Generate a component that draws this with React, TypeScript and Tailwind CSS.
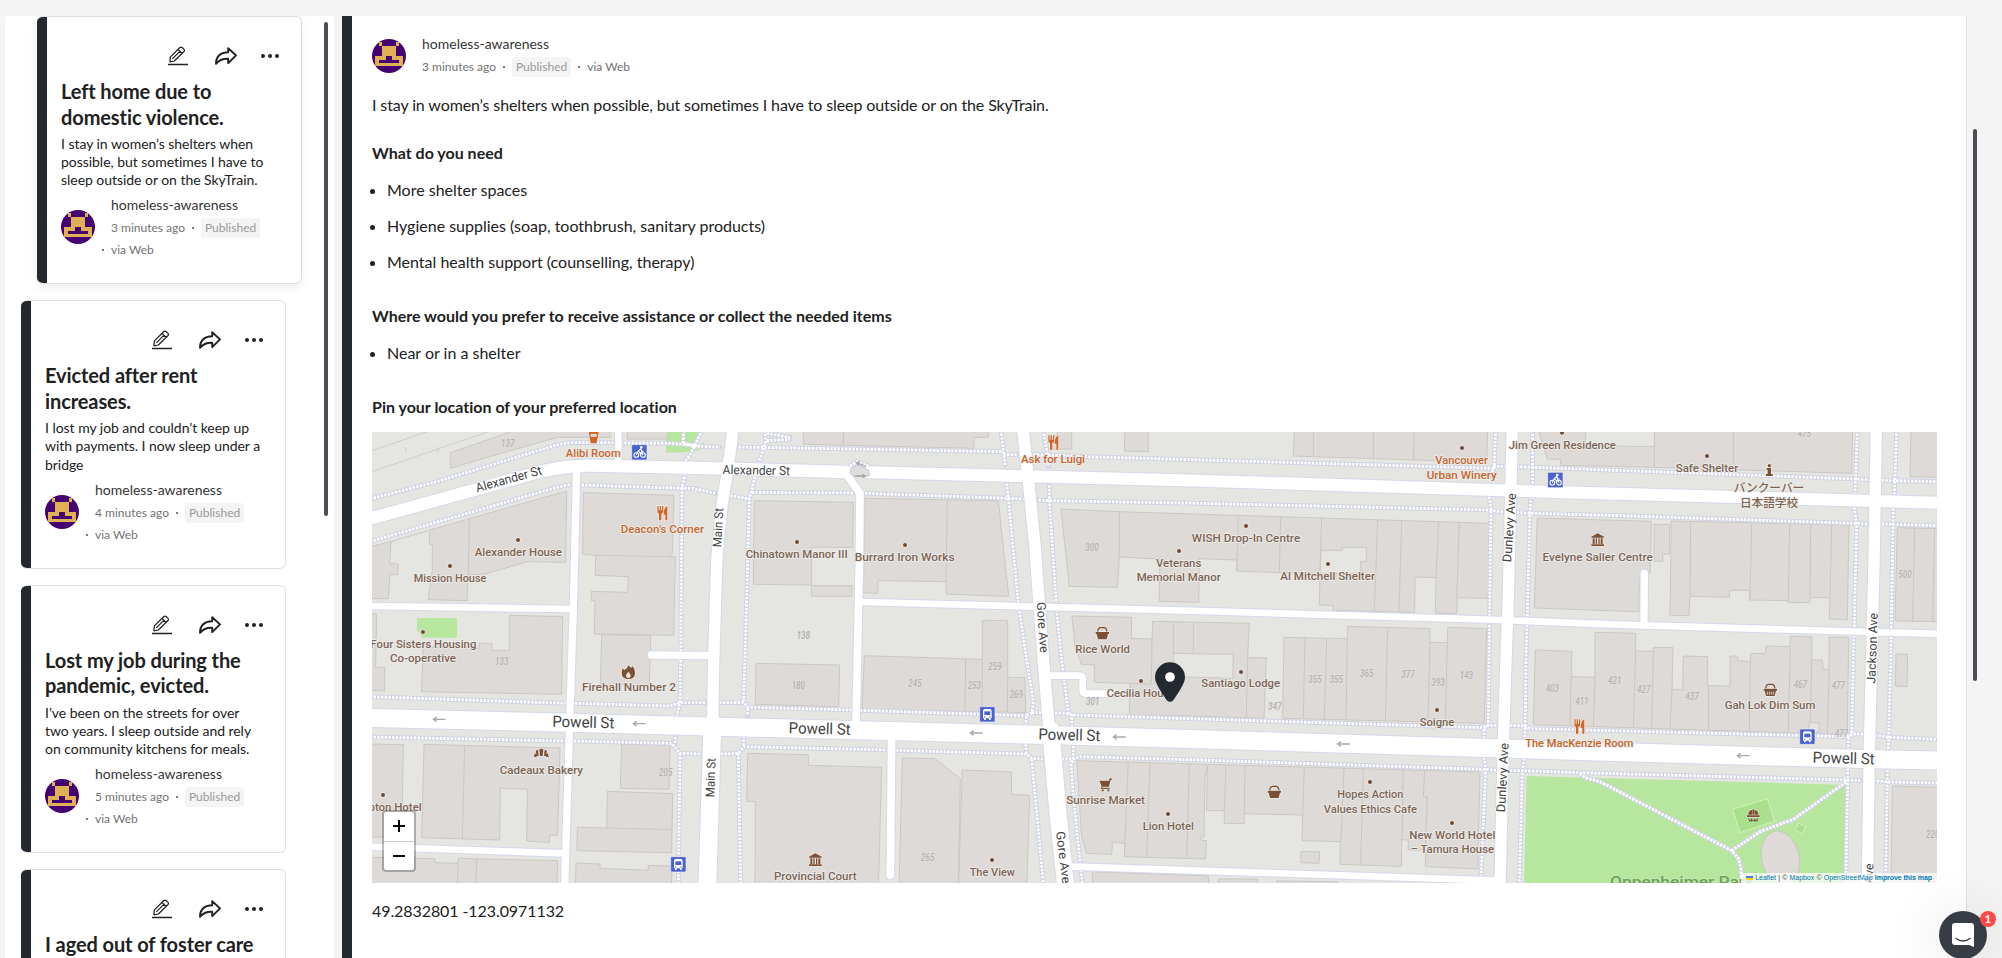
import React from "react";

const BROWN = "#7c6455";
const ORANGE = "#c4652f";
const LAND = "#e5e5e1";

/* ---------- Map geometry (3 units per screen pixel) ---------- */

type Tile = { at: [number, number]; shapes: string[]; lines: string[] };

const buildings: Tile[] = [
  {
    at: [0, 0],
    shapes: [
      "241,115 241,68 420,6 440,0 720,0 720,22 563,22 400,68",
      "180,300 590,183 587,397 473,395 345,432 295,434 291,512 175,509 187,420 187,345 178,343",
      "0,350 63,335 59,400 85,402 83,434 59,434 55,506 0,506",
      "772,0 892,0 892,27 772,27",
      "640,188 912,196 907,370 898,380 916,380 911,616 673,612 675,512 664,512 664,484 773,487 775,440 676,436 677,376 638,373",
      "1153,212 1450,217 1448,352 1325,352 1325,465 1150,463",
      "1324,467 1446,467 1446,499 1324,499",
      "695,614 842,616 838,764 691,764",
      "418,556 578,560 575,793 154,785 160,650 328,655 328,640 365,640 365,661 418,661",
      "0,550 20,552 17,712 44,712 44,782 0,782",
    ],
    lines: ["298,265 295,434", "677,376 898,380", "63,335 180,300"],
  },
  {
    at: [0, 660],
    shapes: [
      "0,282 100,284 95,560 0,562",
      "162,283 570,294 563,556 539,556 538,577 470,573 472,418 391,415 389,570 155,563",
      "0,622 194,626 194,638 264,640 265,625 563,632 560,720 0,720",
      "755,282 900,285 897,418 751,415",
      "712,424 908,431 905,608 621,602 622,532 710,534",
      "618,639 690,642 690,655 834,661 835,646 906,648 904,720 616,720",
      "1158,40 1409,45 1406,170 1156,163",
      "1133,310 1315,314 1315,346 1535,352 1525,720 1155,720 1156,455 1130,454",
    ],
    lines: ["284,287 277,566", "264,640 262,700", "320,627 318,700", "710,534 905,539"],
  },
  {
    at: [1230, 0],
    shapes: [
      "70,0 625,0 625,22 582,22 582,55 70,43",
      "255,205 655,212 686,499 498,492 498,455 294,452 293,490 250,488",
      "607,571 683,572 683,742 735,743 737,848 246,838 253,677 607,688",
      "843,237 1018,245 2130,280 2125,505 2032,503 2030,551 1966,549 1968,443 1905,441 1904,547 1660,541 1660,527 1618,525 1620,430 1500,428 1370,423 1370,390 1258,386 1256,517 1137,514 1140,387 1018,381 1012,472 868,469",
      "876,558 1055,562 1054,625 1116,627 1118,574 1408,580 1403,683 1459,683 1452,865 1230,858 1048,855 1050,760 943,757 943,704 905,704 885,650",
      "838,0 875,0 875,57 803,57",
      "1035,0 1105,0 1105,65 1033,63",
    ],
    lines: [
      "190,0 190,46", "502,209 498,455", "557,687 555,843", "607,688 606,845", "683,742 682,846",
      "1018,245 1018,381", "1375,257 1370,423", "1116,627 1114,760", "1180,577 1180,670", "1240,578 1240,671",
      "1403,683 1399,863", "1050,760 1114,762",
    ],
  },
  {
    at: [1230, 660],
    shapes: [
      "367,324 465,326 541,386 535,720 357,720",
      "547,360 695,366 694,433 749,436 740,720 535,720",
      "890,332 1285,343 1275,382 1272,560 1262,562 1262,570 1279,572 1277,627 1033,620 1035,580 997,577 995,613 920,610 905,560",
      "937,665 1286,678 1286,720 937,720",
    ],
    lines: ["1045,335 1033,620", "1110,337 1100,621", "1228,342 1220,625"],
  },
  {
    at: [2460, 0],
    shapes: [
      "313,0 893,0 890,97 310,78",
      "282,622 472,626 473,589 720,596 720,637 772,638 773,592 890,596 883,880 278,865",
      "1045,0 1988,0 1985,130 1393,112 1112,106 1112,88 1072,87",
      "1042,264 1385,274 1380,430 1350,430 1346,545 1033,534",
      "1036,660 1145,664 1145,740 1215,742 1215,607 1337,610 1337,663 1390,664 1390,652 1449,653 1446,778 1478,780 1480,678 1553,680 1553,767 1620,768 1620,678 1643,678 1643,692 1681,694 1682,670 1727,671 1727,648 1800,650 1801,619 1866,621 1865,690 1897,690 1900,718 1917,718 1918,621 1976,622 1972,908 1912,912 1030,884",
    ],
    lines: [
      "272,261 268,427", "395,263 390,430", "563,270 553,545", "635,273 627,545", "746,277 738,443", "808,279 800,503",
      "345,623 340,867", "410,625 403,868", "472,626 468,870", "593,592 586,874", "720,637 714,877", "772,638 766,879",
      "370,0 370,80", "550,0 550,88", "672,0 671,92", "1393,0 1393,112", "1630,0 1630,120",
      "1143,740 1140,886", "1215,742 1210,888", "1337,663 1330,892", "1390,664 1385,895", "1446,778 1440,897",
      "1556,768 1556,899", "1681,694 1678,902", "1801,650 1795,904", "1865,690 1861,907", "1918,718 1912,912",
    ],
  },
  {
    at: [2460, 660],
    shapes: [
      "52,343 870,366 863,657 706,650 708,600 654,600 655,570 635,569 634,649 450,643 451,575 336,572 338,495 163,491 162,521 103,520 103,482 50,482",
      "333,604 389,606 387,640 333,638",
      "85,687 203,687 203,720 85,720",
      "260,693 443,695 443,720 260,720",
    ],
    lines: ["108,345 103,482", "165,347 163,491", "343,351 338,495", "462,354 453,573", "520,356 512,645", "640,360 636,569", "704,362 700,440 712,441 706,600"],
  },
  {
    at: [3630, 0],
    shapes: [
      "223,283 269,283 268,372 248,372 248,394 222,394",
      "274,273 807,285 802,569 748,567 750,503 690,503 689,518 625,517 625,512 508,510 508,481 449,481 448,502 330,499 327,557 270,556",
      "993,0 1080,0 1080,142 990,140",
      "952,293 1080,296 1080,575 945,573",
      "948,672 983,673 981,770 946,768",
      "937,1068 1080,1072 1080,1380 933,1380",
    ],
    lines: ["332,275 330,499", "515,278 510,510", "629,281 625,515", "692,283 690,503", "755,284 750,503", "1004,294 998,574", "1064,295 1058,575"],
  },
];

const courtyards = [
  "2853,361 2917,361 2917,352 2989,352 2989,394 2972,394 2972,430 2850,430",
  "2411,670 2590,673 2588,745 2411,740",
  "3647,0 3853,0 3853,50 3647,47",
  "4318,878 4348,879 4347,906 4316,905",
];

const footways = [
  "0,207 200,155 560,45 600,38 730,38",
  "752,39 900,40 960,45 1000,50 1050,51",
  "1095,51 1900,65",
  "1900,75 1945,73", "1990,73 2035,75 2145,80 3370,115",
  "3370,108 3410,110", "3440,110 3490,112 4455,147 4500,149", "4535,151 4701,155",
  "940,0 940,40 980,48", "997,0 960,75 945,95", "945,130 936,175 932,690 930,815 920,858",
  "0,335 560,172 605,163", "635,165 936,175 970,175 1035,190", "1070,195 1140,207",
  "1185,0 1187,40 1165,100", "1155,140 1138,207 1125,690 1120,815",
  "1190,10 1260,22", "1190,32 1260,28",
  "1145,187 1460,189", "1485,190 1920,205 1960,207", "1995,210 2040,212 2490,220 3360,240 3405,247",
  "3440,247 3480,250 3720,256 4455,280 4495,282", "4535,282 4701,287",
  "1893,0 1905,105", "1908,150 1915,205 1945,520 1970,690 1990,815 1987,848 1970,855 1967,885",
  "2020,0 2030,60 2036,110", "2038,155 2038,212 2060,540 2075,690 2095,848 2105,855 2105,895",
  "0,800 590,820", "615,820 900,828 930,818 1010,818", "1048,818 1120,818 1135,832 1445,840", "1133,835 1133,858",
  "1470,841 1967,857", "1985,848 2020,848", "2055,848 2090,850 2110,855 2490,867 3340,893 3350,887 3385,886",
  "3420,886 3465,888 3480,896 3720,902 4430,920 4450,912 4480,912", "4515,915 4555,922 4701,928",
  "0,921 590,933", "612,933 905,940 930,970 1000,972", "1052,972 1105,970 1122,950 1555,960",
  "1578,961 1970,972 1985,985 2018,987", "2075,987 2110,987 2130,980 2490,990 3345,1018 3380,1021",
  "3420,1022 3460,1022 3630,1028 4430,1050 4475,1052", "4510,1052 4555,1056 4701,1059",
  "918,910 915,942", "930,970 925,1360", "1122,918 1120,950", "1105,970 1112,1360",
  "1967,942 1970,972", "1985,988 2020,1360", "2110,948 2110,985 2103,1005 2110,1100 2137,1360",
  "3377,0 3372,115 3360,140", "3358,200 3363,240 3357,690 3355,885 3342,895 3342,925",
  "3488,0 3488,165", "3483,200 3480,250 3468,690 3465,930",
  "3342,982 3347,1018 3333,1340", "3463,985 3457,1022 3448,1360",
  "4462,0 4455,195", "4453,232 4460,290 4450,690 4445,910 4435,925 4435,958", "4433,1015 4433,1055 4427,1360",
  "4580,0 4573,195", "4570,235 4562,690 4555,960", "4552,1020 4547,1360",
  "3630,1030 3645,1043 3690,1055 4085,1262 4105,1285 4113,1315 4115,1360",
  "4085,1262 4170,1205 4270,1168 4430,1055",
  "1440,108 1462,95 1500,110",
];

const roads: [string, number][] = [
  ["M0 266L440 145Q560 107 660 107L1040 115L1430 126", 37],
  ["M1500 127L2490 152L3630 188L4701 218", 36],
  ["M1090 -10Q1080 80 1060 200Q1048 280 1040 400L1031 690L1028 890", 34],
  ["M1027 890L1012 1370", 53],
  ["M620 110L611 500L600 840L584 1370", 22],
  ["M0 528L600 537", 20],
  ["M0 1250L580 1270", 20],
  ["M0 864L600 878L1230 895L2030 915L2490 928L3380 955L3630 963L4480 987L4710 992", 54],
  ["M745 0L745 100", 19],
  ["M1430 135L1470 190L1468 400L1462 690L1458 880", 23],
  ["M1565 910L1561 1336", 23],
  ["M1475 516L2490 543L3390 570L3720 583L4710 612", 20],
  ["M1958 -10L1975 150L1995 350L2020 690L2037 890", 35],
  ["M2042 900L2065 1160L2087 1370", 51],
  ["M2040 737L2128 737Q2138 737 2138 747L2138 781Q2138 791 2148 791L2215 791", 20],
  ["M844 675L1030 677", 22],
  ["M2110 1310L2490 1322L3390 1352", 20],
  ["M3427 -10L3415 500L3408 690L3400 940L3390 1370", 34],
  ["M4519 -10L4512 400L4503 760L4498 960L4492 1370", 34],
  ["M3823 430L3822 580", 22],
];

/* x, baseline, text, width, colour */
const places: [number, number, string, number, string][] = [
  [670, 80, "Alibi Room", 165, ORANGE],
  [445, 378, "Alexander House", 262, BROWN],
  [240, 457, "Mission House", 218, BROWN],
  [160, 654, "Four Sisters Housing", 318, BROWN],
  [159, 697, "Co-operative", 198, BROWN],
  [877, 309, "Deacon’s Corner", 250, ORANGE],
  [1280, 385, "Chinatown Manor III", 306, BROWN],
  [777, 784, "Firehall Number 2", 282, BROWN],
  [514, 1031, "Cadeaux Bakery", 250, BROWN],
  [39, 1143, "Hampton Hotel", 232, BROWN],
  [1604, 393, "Burrard Iron Works", 300, BROWN],
  [2049, 98, "Ask for Luigi", 192, ORANGE],
  [2426, 410, "Veterans", 136, BROWN],
  [2426, 453, "Memorial Manor", 252, BROWN],
  [2628, 336, "WISH Drop-In Centre", 325, BROWN],
  [2873, 451, "Al Mitchell Shelter", 284, BROWN],
  [3275, 103, "Vancouver", 158, ORANGE],
  [3275, 146, "Urban Winery", 210, ORANGE],
  [3577, 56, "Jim Green Residence", 321, BROWN],
  [3683, 392, "Evelyne Saller Centre", 331, BROWN],
  [4011, 126, "Safe Shelter", 188, BROWN],
  [4197, 186, "バンクーバー", 212, BROWN],
  [4197, 230, "日本語学校", 174, BROWN],
  [2198, 668, "Rice World", 164, BROWN],
  [2313, 801, "Cecilia House", 206, BROWN],
  [2612, 772, "Santiago Lodge", 236, BROWN],
  [3201, 888, "Soigne", 104, BROWN],
  [3628, 950, "The MacKenzie Room", 325, ORANGE],
  [4200, 838, "Gah Lok Dim Sum", 272, BROWN],
  [1336, 1351, "Provincial Court", 248, BROWN],
  [1867, 1337, "The View", 136, BROWN],
  [2207, 1123, "Sunrise Market", 236, BROWN],
  [2395, 1199, "Lion Hotel", 154, BROWN],
  [3001, 1105, "Hopes Action", 198, BROWN],
  [3001, 1148, "Values Ethics Cafe", 280, BROWN],
  [3247, 1226, "New World Hotel", 258, BROWN],
  [3247, 1270, "– Tamura House", 250, BROWN],
];

const numbers: [number, number, string][] = [
  [413, 50, "137"], [395, 706, "133"], [1300, 627, "138"], [1285, 776, "180"], [1635, 772, "245"],
  [1813, 777, "253"], [1875, 720, "259"], [1939, 805, "269"], [1673, 1294, "265"], [887, 1039, "205"],
  [2166, 362, "300"], [2168, 826, "301"], [2714, 839, "347"], [2835, 758, "355"], [2899, 760, "355"],
  [2990, 742, "365"], [3114, 745, "377"], [3204, 767, "393"], [3289, 747, "143"], [3547, 786, "403"],
  [3636, 825, "411"], [3734, 761, "421"], [3821, 789, "427"], [3966, 810, "437"], [4291, 773, "467"],
  [4405, 778, "477"], [4414, 920, "477"], [4303, 22, "475"], [4605, 443, "500"], [4688, 1225, "220"],
];

/* x, y, rotation, text, width, size */
const streets: [number, number, number, string, number, number][] = [
  [416, 147, -15.5, "Alexander St", 204, 38],
  [1159, 121, 1, "Alexander St", 202, 38],
  [1044, 293, -87, "Main St", 118, 37],
  [1022, 1043, -88, "Main St", 118, 37],
  [640, 877, 1.5, "Powell St", 186, 47],
  [1349, 896, 1.5, "Powell St", 186, 47],
  [2098, 915, 1.5, "Powell St", 186, 47],
  [4421, 985, 1.5, "Powell St", 186, 47],
  [2018, 592, 86, "Gore Ave", 152, 37],
  [2080, 1282, 83, "Gore Ave", 158, 37],
  [3418, 293, -86, "Dunlevy Ave", 208, 37],
  [3398, 1043, -87, "Dunlevy Ave", 208, 37],
  [4507, 655, -88, "Jackson Ave", 212, 37],
  [4494, 1406, -88, "Jackson Ave", 212, 37],
];

const dots: [number, number][] = [
  [444, 330], [240, 408], [159, 606], [39, 1095], [1281, 336], [1605, 345], [2427, 363], [2628, 288], [2874, 402],
  [3276, 54], [3576, 8], [4011, 78], [2313, 753], [2613, 726], [3201, 840], [1866, 1290], [2394, 1152], [3000, 1056], [3246, 1179],
];

const arrows: [number, number][] = [[208, 868], [808, 881], [1819, 909], [2248, 921], [2921, 942], [4120, 977]];

function Cutlery({ x, y }: { x: number; y: number }) {
  return (
    <g transform={`translate(${x} ${y})`} fill="#d1662a" stroke="#f3efea" strokeWidth="4" paintOrder="stroke">
      <path d="M-15-22h4v13h3v-13h4v13h3v-13h4v16q0 5-6 7v20h-7V1q-5-2-5-7z" />
      <path d="M15-23v44H9V4H4q-1-20 11-27z" />
    </g>
  );
}

function Basket({ x, y, slats }: { x: number; y: number; slats?: boolean }) {
  return (
    <g transform={`translate(${x} ${y})`} fill="#7b5135" stroke="#f3efea" strokeWidth="4" paintOrder="stroke">
      <path d="M-20-3h40v6h-3l-4 16h-26l-4-16h-3z" />
      <path d="M-14-4q2-12 9-12H5q7 0 9 12" fill="none" stroke="#7b5135" strokeWidth="3.5" />
      {slats && <path d="M-9 6v9M-3 6v9M3 6v9M9 6v9" stroke="#e8e2dc" strokeWidth="2.5" />}
    </g>
  );
}

function Museum({ x, y }: { x: number; y: number }) {
  return (
    <g transform={`translate(${x} ${y})`} fill="#7b5135" stroke="#f3efea" strokeWidth="3" paintOrder="stroke">
      <path d="M-19-9L0-19 19-9v3h-38zM-15-4h6v17h-6zM-6-4h4v17h-4zM2-4h4v17H2zM9-4h6v17H9zM-19 14h38v5h-38z" />
    </g>
  );
}

function Bike({ x, y }: { x: number; y: number }) {
  return (
    <g transform={`translate(${x} ${y})`}>
      <rect x="-23" y="-23" width="46" height="46" rx="3" fill="#4a62cf" stroke="#eef0f8" strokeWidth="2" />
      <g fill="none" stroke="#fff" strokeWidth="3.2">
        <circle cx="-9" cy="8" r="7" />
        <circle cx="11" cy="8" r="7" />
        <path d="M-9 8l5-11 7 4v8M-4-3l8-8 4 8h5M4-11l7 19" />
      </g>
      <circle cx="6" cy="-15" r="4" fill="#fff" />
    </g>
  );
}

function Bus({ x, y }: { x: number; y: number }) {
  return (
    <g transform={`translate(${x} ${y})`}>
      <rect x="-23" y="-23" width="46" height="46" rx="3" fill="#4a62cf" stroke="#eef0f8" strokeWidth="2" />
      <path d="M-13 12v-22q0-6 6-6H7q6 0 6 6v22h-3v5H5v-5H-5v5h-5v-5z" fill="#fff" />
      <path d="M-9-9H9V2H-9z" fill="#4a62cf" />
      <circle cx="-8" cy="8" r="2" fill="#4a62cf" />
      <circle cx="8" cy="8" r="2" fill="#4a62cf" />
    </g>
  );
}

function MapDrawing() {
  return (
    <svg viewBox="6 6 4695 1353" className="block h-full w-full font-[Roboto,'Noto_Sans_CJK_JP',sans-serif]" preserveAspectRatio="none">
      <rect width="4710" height="1370" fill={LAND} />
      <g fill="none" stroke="#c9c9cb" strokeWidth="2.5">
        <path d="M0 64L186 0M0 127L370 0M104 50l6 16M200 50l6 16" />
      </g>
      <g fill="#b7e69f">
        <path d="M888 0H992L975 65L888 68zM975 60L1002 36V44L985 62z" />
        <path d="M141 564H261V623H158L141 600z" />
        <path d="M3470 1038L4432 1065L4425 1370H3462z" />
      </g>
      <path d="M4088 1138L4192 1106L4214 1174L4110 1208zM4285 1179L4308 1190L4297 1211L4276 1201z" fill="#a9df8f" stroke="#d8f3b4" strokeWidth="3" />
      <ellipse cx="4231" cy="1284" rx="56" ry="82" transform="rotate(-12 4231 1284)" fill="#dddad7" stroke="#cbc8c4" strokeWidth="3" />
      {buildings.map((tile, i) => (
        <g key={i} transform={`translate(${tile.at[0]} ${tile.at[1]})`} stroke="#cbc8c4" strokeWidth="3">
          {tile.shapes.map((p) => (
            <polygon key={p} points={p} fill="#dddad7" />
          ))}
          {tile.lines.map((p) => (
            <polyline key={p} points={p} fill="none" />
          ))}
        </g>
      ))}
      {courtyards.map((p) => (
        <polygon key={p} points={p} fill={LAND} stroke="#cbc8c4" strokeWidth="3" />
      ))}
      <g fill="none" strokeLinejoin="round">
        {footways.map((p) => (
          <polyline key={p} points={p} stroke="#d0d3e3" strokeWidth="14" strokeLinecap="round" />
        ))}
        {footways.map((p) => (
          <polyline key={p} points={p} stroke="#fff" strokeWidth="8.5" strokeDasharray="7 4" />
        ))}
      </g>
      <g fill="none" strokeLinejoin="round" strokeLinecap="round">
        {roads.map(([d, w]) => (
          <path key={d} d={d} stroke="#d5d8e8" strokeWidth={w + 6} strokeLinecap="butt" />
        ))}
        <path d="M844 675h1M1561 1336v1M3823 430v1" stroke="#d5d8e8" strokeWidth="28" />
        {roads.map(([d, w]) => (
          <path key={d} d={d} stroke="#fff" strokeWidth={w} />
        ))}
      </g>
      <path d="M1440 130L1442 118L1462 104L1496 120L1498 138H1455z" fill="#e0dfde" stroke="#c8cad6" strokeWidth="3" />
      <path d="M1455 138H1485M1478 133l8 5-8 5M1486 108L1462 99M1470 95l-10 3 6 8" fill="none" stroke="#aaa29e" strokeWidth="4" />
      {arrows.map(([x, y]) => (
        <path key={x} d={`M${x - 18} ${y}H${x + 19}M${x - 8} ${y - 7}L${x - 18} ${y}L${x - 8} ${y + 7}`} fill="none" stroke="#b0a8a4" strokeWidth="4" />
      ))}
      <g fontSize="30" fontStyle="italic" fontWeight="500" fill="#b3b0ad" textAnchor="middle" stroke="#e6e4e2" strokeWidth="3" paintOrder="stroke">
        {numbers.map(([x, y, t]) => (
          <text key={`${x}-${y}`} x={x} y={y} textLength="40" lengthAdjust="spacingAndGlyphs">{t}</text>
        ))}
      </g>
      <g fill="#434343" textAnchor="middle" stroke="#fff" strokeWidth="5" paintOrder="stroke">
        {streets.map(([x, y, r, t, w, s]) => (
          <text key={`${x}-${y}`} transform={`translate(${x} ${y}) rotate(${r})`} y={s * 0.34} fontSize={s} textLength={w} lengthAdjust="spacingAndGlyphs">{t}</text>
        ))}
      </g>
      <g fontSize="35.5" fontWeight="500" textAnchor="middle" stroke="#f0eeeb" strokeWidth="5" strokeLinejoin="round" paintOrder="stroke">
        {places.map(([x, y, t, w, c]) => (
          <text key={t} x={x} y={y} fill={c} textLength={w} lengthAdjust="spacingAndGlyphs">{t}</text>
        ))}
      </g>
      <text x="3936" y="1370" fontSize="45" fontWeight="500" textAnchor="middle" fill="#6f9f60" stroke="#c4eab0" strokeWidth="4" paintOrder="stroke" textLength="432" lengthAdjust="spacingAndGlyphs">Oppenheimer Park</text>
      <g fill="#6f4a35" stroke="#efebe7" strokeWidth="4" paintOrder="stroke">
        {dots.map(([x, y]) => (
          <circle key={`${x}-${y}`} cx={x} cy={y} r="6" />
        ))}
      </g>
      <Cutlery x={877} y={250} />
      <Cutlery x={2050} y={38} />
      <Cutlery x={3628} y={890} />
      <path d="M656 6H686L680 40H662zM662 12h18v8h-18z" fill="#d1662a" fillRule="evenodd" stroke="#f3efea" strokeWidth="3" paintOrder="stroke" />
      <Bike x={808} y={67} />
      <Bike x={3556} y={150} />
      <Bus x={925} y={1303} />
      <Bus x={1852} y={853} />
      <Bus x={4312} y={920} />
      <Museum x={3683} y={329} />
      <Museum x={1336} y={1289} />
      <Basket x={2197} y={609} />
      <Basket x={2713} y={1085} />
      <Basket x={4201} y={779} slats />
      <g transform="translate(775 727)">
        <path d="M1-22q3 6 8 8l3-5q9 9 8 20 0 19-20 19t-20-19q0-7 4-13l4 5q9-4 13-15z" fill="#7b5135" stroke="#f3efea" strokeWidth="4" paintOrder="stroke" />
        <path d="M0-2q7 7 7 12 0 7-7 7t-7-7q0-5 7-12z" fill="#e9e4df" />
      </g>
      <g transform="translate(514 969)" fill="#7b5135" stroke="#f3efea" strokeWidth="3" paintOrder="stroke">
        <path d="M-6-11q6-3 12 0l-2 20h-8zM-17-7l7-3 2 19h-6zM17-7l-7-3-2 19h6zM-22 12l2-12 5 4 1 8zM22 12l-2-12-5 4-1 8z" />
      </g>
      <g transform="translate(2207 1064)" fill="#7b5135" stroke="#f3efea" strokeWidth="3" paintOrder="stroke">
        <path d="M-19-12H10l1-4q1-4 7-4v5q-3 0-4 3L10 6h-20v3h22v4h-25q-3-4 1-8z" />
        <circle cx="-9" cy="17" r="3.5" />
        <circle cx="8" cy="17" r="3.5" />
      </g>
      <g transform="translate(4198 120)" fill="#7b5135" stroke="#f3efea" strokeWidth="4" paintOrder="stroke">
        <path d="M-8-6H5v18h5v6h-20v-6h5V0h-3z" />
        <circle cx="0" cy="-13" r="5" />
      </g>
      <g transform="translate(4150 1157)" fill="#7b5135" stroke="#f3efea" strokeWidth="3" paintOrder="stroke">
        <path d="M-16-3q2-14 13-15v15zM3-18q11 1 13 15H3zM-2-19h4v16h-4zM-19-1h38v5h-38z" />
        <path d="M-14 8l4 10M-12 14H12M14 8l-4 10M-5 8v10M5 8v10" fill="none" stroke="#7b5135" strokeWidth="3" />
      </g>
      <path fillRule="evenodd" d="M2400 697a45 45 0 0 1 45 45c0 16-14 38-34 67q-11 13-22 0c-20-29-34-51-34-67a45 45 0 0 1 45-45z" fill="#24282f" />
      <circle cx="2400" cy="741" r="14.5" fill="#fff" />
    </svg>
  );
}

/* ---------- Shared pieces ---------- */

function Avatar() {
  return (
    <svg viewBox="0 0 34 34" className="size-[34px] shrink-0 rounded-full" shapeRendering="crispEdges">
      <rect width="34" height="34" fill="#440171" />
      <path d="M7 3h3v4H7zM24 3h3v4h-3zM10 7h14v10H10zM3 17h11v3h6v-3h11v10H3z" fill="#e0b054" />
      <path d="M7 21h20v3H7zM14 17h6v4h-6z" fill="#440171" />
    </svg>
  );
}

function PencilIcon() {
  return (
    <svg viewBox="0 0 20 20" className="h-5 w-5" fill="none" stroke="#212121" strokeWidth="1.25" strokeLinejoin="round">
      <path d="M1.8 15.8L2.4 10.9 11.9 1.5Q13 .6 14.1 1.5L16 3.4Q16.9 4.5 16 5.5L6.4 15 1.8 15.8M10 3.4L14 7.4M4.3 12.9L11.8 5.4" />
      <path d="M0 18.5H20" strokeWidth="1.4" />
    </svg>
  );
}

function ShareIcon() {
  return (
    <svg viewBox="0 0 22 18" className="h-[18px] w-[22px]" fill="none" stroke="#212121" strokeWidth="1.9" strokeLinejoin="round">
      <path d="M13.2 1.2L21 8.4 13.2 16.2V11.8Q5.5 11.4 1 16.8 1 5.8 13.2 5.2z" />
    </svg>
  );
}

function DotsIcon() {
  return (
    <svg viewBox="0 0 18 4" className="h-1 w-[18px]" fill="#212121">
      <circle cx="2" cy="2" r="2" />
      <circle cx="9" cy="2" r="2" />
      <circle cx="16" cy="2" r="2" />
    </svg>
  );
}

function Dot() {
  return <span className="size-[2px] shrink-0 bg-[#777]" />;
}

function Published() {
  return <span className="flex h-5 items-center rounded-[3px] bg-[#f4f4f4] px-[4px] text-[#999]">Published</span>;
}

type Post = { title: string; body?: string; age?: string; active?: boolean };

const posts: Post[] = [
  { title: "Left home due to domestic violence.", body: "I stay in women’s shelters when possible, but sometimes I have to sleep outside or on the SkyTrain.", age: "3 minutes ago", active: true },
  { title: "Evicted after rent increases.", body: "I lost my job and couldn’t keep up with payments. I now sleep under a bridge", age: "4 minutes ago" },
  { title: "Lost my job during the pandemic, evicted.", body: "I’ve been on the streets for over two years. I sleep outside and rely on community kitchens for meals.", age: "5 minutes ago" },
  { title: "I aged out of foster care" },
];

function PostCard({ post }: { post: Post }) {
  return (
    <article
      className={
        post.active
          ? "ml-4 flex h-[268.4px] w-[265px] shrink-0 overflow-hidden rounded-[6px] border border-l-0 border-[#e0e0e0] bg-white shadow-[0_4px_10px_rgba(0,0,0,0.07)]"
          : "flex h-[268.4px] w-[265px] shrink-0 overflow-hidden rounded-[6px] border border-l-0 border-[#e0e0e0] bg-white"
      }
    >
      <div className="-my-px w-[10px] shrink-0 bg-[#24282f]" />
      <div className="flex min-w-0 grow flex-col pl-[14px] pr-[22px] pt-[29px]">
        <div className="flex h-5 items-center justify-end">
          <PencilIcon />
          <span className="ml-[27px]"><ShareIcon /></span>
          <span className="ml-[24px]"><DotsIcon /></span>
        </div>
        <h2 className="mt-[13px] text-[20px] font-bold leading-[25.6px] tracking-[-0.1px] text-[#212121]">{post.title}</h2>
        {post.body && <p className="mt-[4.6px] text-[14px] leading-[18.2px] tracking-[-0.04px] text-[#212121]">{post.body}</p>}
        {post.age && (
          <div className="mt-[6px] flex items-center">
            <Avatar />
            <div className="ml-4 text-[12px] text-[#727272]">
              <div className="text-[14px] leading-5 text-[#363636]">homeless-awareness</div>
              <div className="mt-[3px] flex items-center gap-[7px]">
                {post.age}
                <Dot />
                <Published />
              </div>
              <div className="-ml-[9px] mt-[3px] flex items-center gap-[7px]">
                <Dot />
                via Web
              </div>
            </div>
          </div>
        )}
      </div>
    </article>
  );
}

function Question({ title, items }: { title: string; items: string[] }) {
  return (
    <section>
      <h3 className="text-[16px] font-bold leading-6">{title}</h3>
      <ul className="mt-[13px] list-disc pl-[15px]">
        {items.map((item) => (
          <li key={item} className="mb-3 text-[16px] leading-6">{item}</li>
        ))}
      </ul>
    </section>
  );
}

export default function App() {
  return (
    <div className="relative flex h-[958px] w-[2002px] overflow-hidden bg-[#f4f4f4] pl-[5px] pt-4 font-[Lato,sans-serif] text-[#212121] [font-variant-ligatures:none]">
      <aside className="flex w-[329px] shrink-0 justify-between overflow-hidden rounded-t-[3px] bg-white pl-4 pr-[6px]">
        <div className="flex flex-col gap-4">
          {posts.map((post) => (
            <PostCard key={post.title} post={post} />
          ))}
        </div>
        <div className="mt-[6px] h-[494px] w-1 shrink-0 rounded-full bg-[#4a4f56]" />
      </aside>

      <main className="ml-2 flex w-[1625px] shrink-0 border-r border-[#e0e0e0] bg-white">
        <div className="w-[10px] shrink-0 bg-[#24282f]" />
        <div className="flex flex-col pl-5 pt-[18px]">
          <div className="flex items-center">
            <div className="mt-[1px]"><Avatar /></div>
            <div className="ml-4 text-[12px] text-[#727272]">
              <div className="text-[14px] leading-5 text-[#363636]">homeless-awareness</div>
              <div className="mt-[3px] flex items-center gap-[7px]">
                3 minutes ago
                <Dot />
                <Published />
                <Dot />
                via Web
              </div>
            </div>
          </div>
          <p className="mt-[16px] text-[16px] leading-6 tracking-[-0.115px]">I stay in women’s shelters when possible, but sometimes I have to sleep outside or on the SkyTrain.</p>
          <div className="mt-6 flex flex-col gap-[18px]">
            <Question title="What do you need" items={["More shelter spaces", "Hygiene supplies (soap, toothbrush, sanitary products)", "Mental health support (counselling, therapy)"]} />
            <Question title="Where would you prefer to receive assistance or collect the needed items" items={["Near or in a shelter"]} />
            <h3 className="text-[16px] font-bold leading-6">Pin your location of your preferred location</h3>
          </div>
          <div className="relative mt-[13px] h-[451px] w-[1565px] overflow-hidden">
            <MapDrawing />
            <div className="absolute bottom-[11px] left-[10px] flex h-[62px] w-[34px] flex-col rounded-[4px] border-2 border-black/25 bg-white bg-clip-padding">
              <button className="flex flex-1 items-center justify-center border-b border-[#ccc]">
                <svg viewBox="0 0 12 12" className="size-3" stroke="#000" strokeWidth="2"><path d="M0 6H12M6 0V12" /></svg>
              </button>
              <button className="flex flex-1 items-center justify-center">
                <svg viewBox="0 0 12 12" className="size-3" stroke="#000" strokeWidth="2"><path d="M0 6H12" /></svg>
              </button>
            </div>
            <div className="absolute bottom-0 right-0 flex h-[10px] w-[196px] items-center justify-between whitespace-nowrap bg-white/75 pl-[5px] pr-[5px] font-['Liberation_Sans',sans-serif] text-[7px] leading-[10px] tracking-[-0.05px] text-[#0078a8]">
              <svg viewBox="0 0 7 4" className="h-1 w-[7px]"><path fill="#4c7be1" d="M0 0h7v2H0z" /><path fill="#ffd500" d="M0 2h7v2H0z" /></svg>
              <span>Leaflet</span>
              <span className="text-[#444]">|</span>
              <span className="text-[#444]">©</span>
              <span>Mapbox</span>
              <span className="text-[#444]">©</span>
              <span>OpenStreetMap</span>
              <b>Improve this map</b>
            </div>
          </div>
          <p className="mt-[16px] text-[16px] leading-6 tracking-[-0.08px]">49.2832801 -123.0971132</p>
        </div>
      </main>
      <div className="ml-[6px] mt-[113px] h-[552px] w-1 shrink-0 rounded-full bg-[#4a4f56]" />

      <button className="absolute left-[1939px] top-[911px] flex size-12 items-center justify-center rounded-full bg-[#383d45] shadow-[0_1px_50px_12px_rgba(0,0,0,0.06)]">
        <svg viewBox="0 0 22 24" className="h-6 w-[22px]">
          <path d="M3 0h16q3 0 3 3v21l-5-2H3q-3 0-3-3V3q0-3 3-3z" fill="#fff" />
          <path d="M4 15.5q7 5 14 0" fill="none" stroke="#383d45" strokeWidth="1.4" strokeLinecap="round" />
        </svg>
      </button>
      <span className="absolute left-[1980px] top-[911px] flex size-4 items-center justify-center rounded-full bg-[#ff4a4a] text-[11px] font-bold text-white">1</span>
    </div>
  );
}
